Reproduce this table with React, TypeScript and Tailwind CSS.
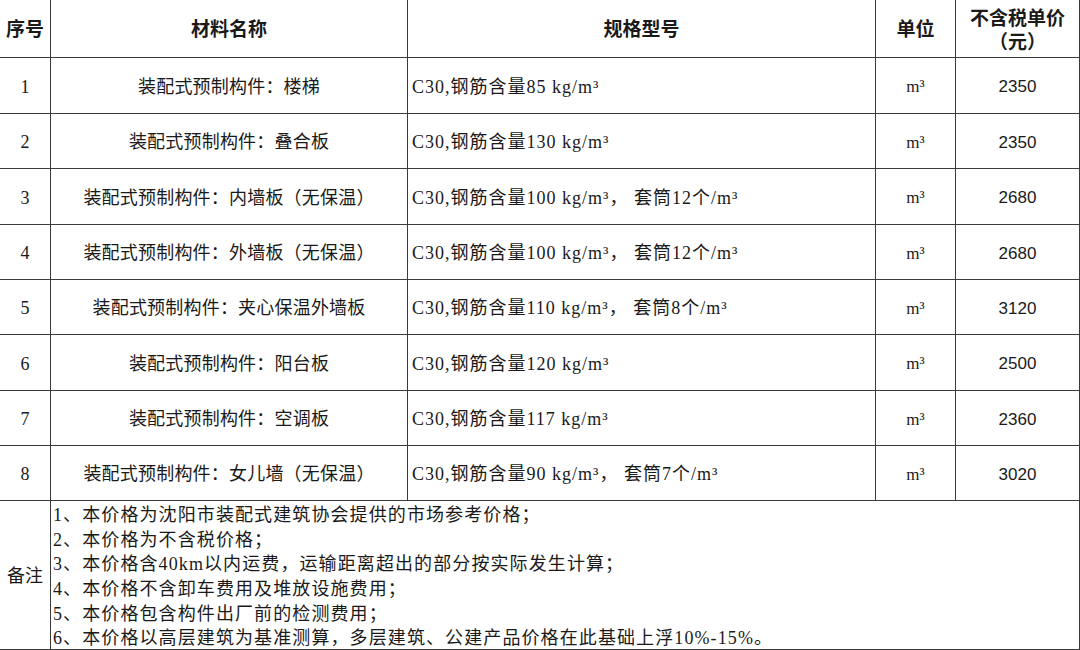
const rows = [
  { no: "1", name: "装配式预制构件：楼梯", spec: "C30,钢筋含量85 kg/m³", price: "2350" },
  { no: "2", name: "装配式预制构件：叠合板", spec: "C30,钢筋含量130 kg/m³", price: "2350" },
  { no: "3", name: "装配式预制构件：内墙板（无保温）", spec: "C30,钢筋含量100 kg/m³， 套筒12个/m³", price: "2680" },
  { no: "4", name: "装配式预制构件：外墙板（无保温）", spec: "C30,钢筋含量100 kg/m³， 套筒12个/m³", price: "2680" },
  { no: "5", name: "装配式预制构件：夹心保温外墙板", spec: "C30,钢筋含量110 kg/m³， 套筒8个/m³", price: "3120" },
  { no: "6", name: "装配式预制构件：阳台板", spec: "C30,钢筋含量120 kg/m³", price: "2500" },
  { no: "7", name: "装配式预制构件：空调板", spec: "C30,钢筋含量117 kg/m³", price: "2360" },
  { no: "8", name: "装配式预制构件：女儿墙（无保温）", spec: "C30,钢筋含量90 kg/m³， 套筒7个/m³", price: "3020" },
];

const notes = [
  "1、本价格为沈阳市装配式建筑协会提供的市场参考价格；",
  "2、本价格为不含税价格；",
  "3、本价格含40km以内运费，运输距离超出的部分按实际发生计算；",
  "4、本价格不含卸车费用及堆放设施费用；",
  "5、本价格包含构件出厂前的检测费用；",
  "6、本价格以高层建筑为基准测算，多层建筑、公建产品价格在此基础上浮10%-15%。",
];

const heights = ["h-[56px]", "h-[55px]", "h-[56px]", "h-[55px]", "h-[55px]", "h-[56px]", "h-[55px]", "h-[55px]"];

const serif = "font-['Liberation_Serif','Noto_Sans_CJK_SC',serif]";
const cell = "border-r border-b border-[#3a3a3a] flex items-center";
const head = "h-[58px] justify-center font-['Noto_Sans_CJK_SC',sans-serif] font-bold text-[19px]";

export default function App() {
  return (
    <div className={`w-[1080px] h-[650px] bg-white text-[#1a1a1a] overflow-hidden ${serif}`}>
      <div className="grid grid-cols-[51px_357px_468px_80px_124px]">
        {/* header */}
        <div className={`${cell} ${head}`}>序号</div>
        <div className={`${cell} ${head}`}>材料名称</div>
        <div className={`${cell} ${head}`}>规格型号</div>
        <div className={`${cell} ${head}`}>单位</div>
        <div className={`${cell} ${head}`}>
          <p className="text-center leading-[24px]">
            不含税单价
            <br />
            （元）
          </p>
        </div>

        {rows.map((r, i) => (
          <div key={r.no} className="contents">
            <div className={`${cell} ${heights[i]} pt-[3px] justify-center text-[18px]`}>{r.no}</div>
            <div className={`${cell} ${heights[i]} pt-[3px] justify-center text-[18px] tracking-[0.2px]`}>{r.name}</div>
            <div className={`${cell} ${heights[i]} pt-[3px] pl-[4px] text-[18px] tracking-[1px] whitespace-pre`}>{r.spec}</div>
            <div className={`${cell} ${heights[i]} pt-[3px] justify-center text-[17px]`}>m³</div>
            <div className={`${cell} ${heights[i]} pt-[3px] justify-center text-[17px] font-['Liberation_Sans',sans-serif]`}>{r.price}</div>
          </div>
        ))}

        {/* notes */}
        <div className={`${cell} h-[149px] pt-[3px] justify-center text-[18px]`}>备注</div>
        <div className={`${cell} h-[149px] col-span-4 flex-col items-start justify-center pt-[4px] pl-[2px] text-[18px] leading-[24.6px] tracking-[1.1px]`}>
          {notes.map((n) => (
            <div key={n}>{n}</div>
          ))}
        </div>
      </div>
    </div>
  );
}
